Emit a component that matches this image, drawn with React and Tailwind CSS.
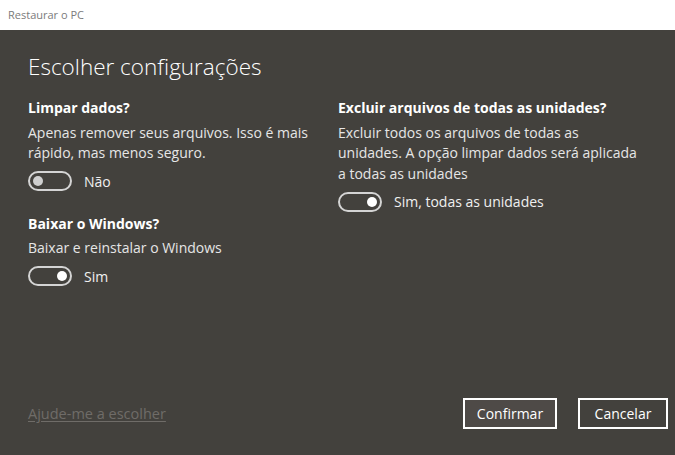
const font = { fontFamily: '"Open Sans", "Noto Sans", sans-serif' };

function Toggle({ on }) {
  return (
    <div className="flex h-[20px] w-[44px] items-center rounded-full border-2 border-[#d4d4d4] px-[3px]">
      <div
        className={
          on
            ? "ml-auto h-[10px] w-[10px] rounded-full bg-white"
            : "h-[10px] w-[10px] rounded-full bg-[#cfcfcf]"
        }
      />
    </div>
  );
}

function Option({ title, description, on, label }) {
  return (
    <div>
      <h2 className="text-[14px] font-bold leading-[21px] text-white">{title}</h2>
      <p className="mt-[4.5px] text-[14px] leading-[20.5px] text-[#e6e6e6]">{description}</p>
      <div className="mt-[7px] flex items-center gap-[12px]">
        <Toggle on={on} />
        <span className="text-[14px] text-[#f0f0f0]">{label}</span>
      </div>
    </div>
  );
}

export default function App() {
  return (
    <div className="flex h-[455px] w-[675px] flex-col overflow-hidden bg-white" style={font}>
      <div className="flex h-[30px] items-center px-[8px] text-[11px] text-[#7b7b7b]">
        Restaurar o PC
      </div>

      <div className="flex flex-1 flex-col bg-[#43413d] pl-[28px] pr-[7px] pt-[21px] pb-[26px]">
        <h1 className="text-[22.5px] font-light leading-[32px] text-white">
          Escolher configurações
        </h1>

        <div className="mt-[14px] grid grid-cols-[300px_305px] gap-[10px]">
          <div className="flex flex-col gap-[21px]">
            <Option
              title="Limpar dados?"
              description="Apenas remover seus arquivos. Isso é mais rápido, mas menos seguro."
              on={false}
              label="Não"
            />
            <Option
              title="Baixar o Windows?"
              description="Baixar e reinstalar o Windows"
              on={true}
              label="Sim"
            />
          </div>
          <div>
            <Option
              title="Excluir arquivos de todas as unidades?"
              description="Excluir todos os arquivos de todas as unidades. A opção limpar dados será aplicada a todas as unidades"
              on={true}
              label="Sim, todas as unidades"
            />
          </div>
        </div>

        <div className="flex-1" />

        <div className="flex items-center">
          <a className="text-[14.5px] text-[#6f6c68] underline underline-offset-2">
            Ajude-me a escolher
          </a>
          <div className="ml-auto flex gap-[21px]">
            <button className="h-[31px] w-[94px] border-2 border-white bg-[#4e4a47] text-[14px] text-white">
              Confirmar
            </button>
            <button className="h-[31px] w-[90px] border-2 border-white bg-[#43413d] text-[14px] text-white">
              Cancelar
            </button>
          </div>
        </div>
      </div>
    </div>
  );
}
